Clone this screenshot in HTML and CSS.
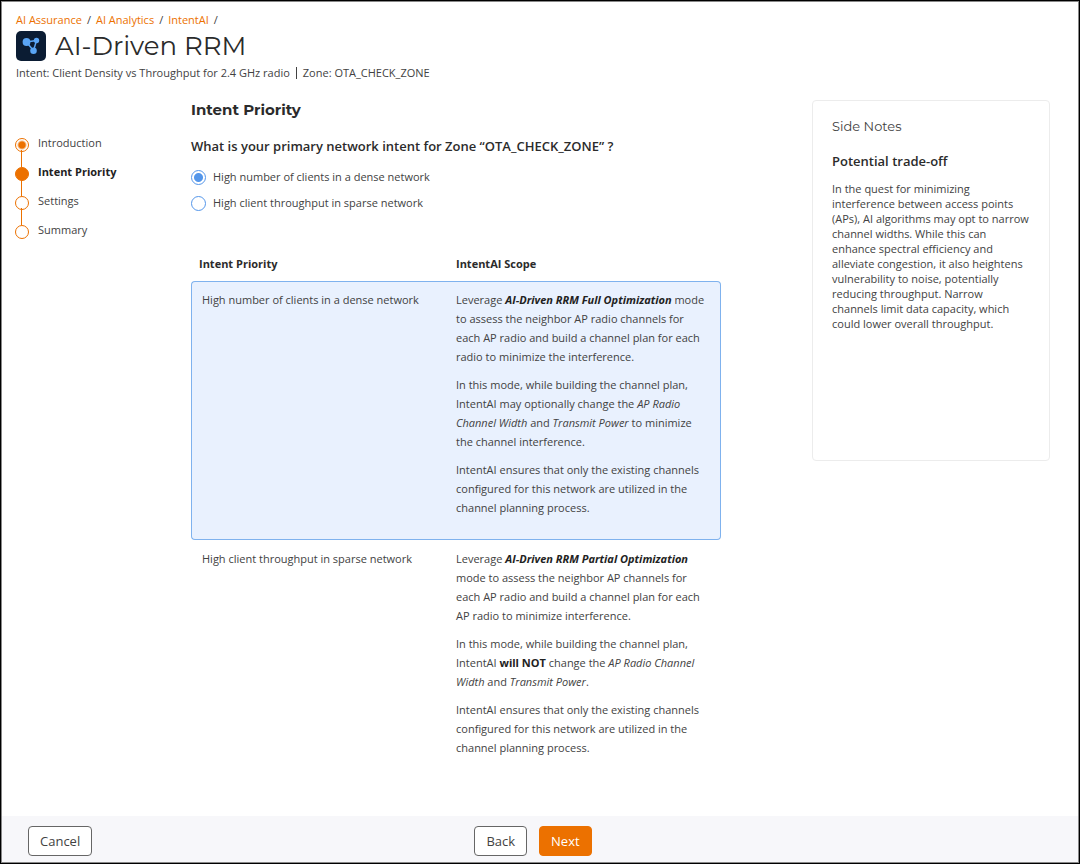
FILE: index.html
```html
<!DOCTYPE html>
<html lang="en">
<head>
  <meta charset="UTF-8" />
  <meta name="viewport" content="width=device-width, initial-scale=1" />
  <title>AI-Driven RRM</title>
  <link rel="stylesheet" href="styles.css">
</head>
<body>
  <form class="page">
    <header class="page-header">
      <nav class="breadcrumb" aria-label="Breadcrumb">
        <a href="#">AI Assurance</a><span>/</span>
        <a href="#">AI Analytics</a><span>/</span>
        <a href="#">IntentAI</a><span>/</span>
      </nav>
      <div class="title-row">
        <svg class="title-icon" viewBox="0 0 30 30" aria-hidden="true">
          <rect width="30" height="30" rx="5" fill="#0b1c33" />
          <path d="M10.500 11L20.500 9.500L17.500 19.700Z" fill="none" stroke="#5aa5f5" stroke-width="1.500" />
          <circle cx="10.500" cy="11" r="3.900" fill="#5aa5f5" />
          <circle cx="20.500" cy="9.500" r="2.700" fill="#5aa5f5" />
          <circle cx="17.500" cy="19.800" r="3.300" fill="#5aa5f5" />
        </svg>
        <h1>AI-Driven RRM</h1>
      </div>
      <div class="subtitle">
        <span>Intent: Client Density vs Throughput for 2.4 GHz radio</span>
        <span class="divider"></span>
        <span>Zone: OTA_CHECK_ZONE</span>
      </div>
    </header>

    <div class="content">
      <ol class="steps">
        <li class="step done">Introduction</li>
        <li class="step active" aria-current="step">Intent Priority</li>
        <li class="step">Settings</li>
        <li class="step">Summary</li>
      </ol>

      <main class="main">
        <h2>Intent Priority</h2>
        <fieldset class="options">
          <legend>What is your primary network intent for Zone “OTA_CHECK_ZONE” ?</legend>
          <label class="option"><input type="radio" name="intent" checked />High number of clients in a dense network</label>
          <label class="option"><input type="radio" name="intent" />High client throughput in sparse network</label>
        </fieldset>

        <table class="scope">
          <thead>
            <tr>
              <th scope="col">Intent Priority</th>
              <th scope="col">IntentAI Scope</th>
            </tr>
          </thead>
          <tbody>
            <tr class="selected">
              <td>High number of clients in a dense network</td>
              <td>
                <p>Leverage <b><i>AI-Driven RRM Full Optimization</i></b> mode to assess the neighbor AP radio channels for each AP radio and build a channel plan for each radio to minimize the interference.</p>
                <p>In this mode, while building the channel plan, IntentAI may optionally change the <i>AP Radio Channel Width</i> and <i>Transmit Power</i> to minimize the channel interference.</p>
                <p>IntentAI ensures that only the existing channels configured for this network are utilized in the channel planning process.</p>
              </td>
            </tr>
            <tr>
              <td>High client throughput in sparse network</td>
              <td>
                <p>Leverage <b><i>AI-Driven RRM Partial Optimization</i></b> mode to assess the neighbor AP channels for each AP radio and build a channel plan for each AP radio to minimize interference.</p>
                <p>In this mode, while building the channel plan, IntentAI <b>will NOT</b> change the <i>AP Radio Channel Width</i> and <i>Transmit Power</i>.</p>
                <p>IntentAI ensures that only the existing channels configured for this network are utilized in the channel planning process.</p>
              </td>
            </tr>
          </tbody>
        </table>
      </main>

      <aside class="notes">
        <h3>Side Notes</h3>
        <h4>Potential trade-off</h4>
        <p>In the quest for minimizing interference between access points (APs), AI algorithms may opt to narrow channel widths. While this can enhance spectral efficiency and alleviate congestion, it also heightens vulnerability to noise, potentially reducing throughput. Narrow channels limit data capacity, which could lower overall throughput.</p>
      </aside>
    </div>

    <footer class="actions">
      <div><button type="button" class="btn">Cancel</button></div>
      <div class="nav-buttons">
        <button type="button" class="btn">Back</button>
        <button type="button" class="btn primary">Next</button>
      </div>
    </footer>
  </form>
</body>
</html>
```

FILE: styles.css
```css
* {
  box-sizing: border-box;
}
body {
  margin: 0;
  padding-bottom: 1px;
  font-family: "Open Sans", sans-serif;
  font-size: 11px;
  line-height: 16px;
  color: #424242;
  background: #fff;
}
h1, h2, h3, h4, p, ol, fieldset {
  margin: 0;
  padding: 0;
}
h1, h2, h3 {
  font-family: Montserrat, Inter, sans-serif;
}
.page {
  display: flex;
  flex-direction: column;
  min-height: calc(100vh - 1px);
  border: 1px solid #000;
  outline: 1px solid #888;
  outline-offset: -2px;
}
.page-header {
  padding: 11px 15px 0;
}
.breadcrumb {
  display: flex;
  gap: 5px;
}
.breadcrumb a {
  color: #ec7100;
  text-decoration: none;
}
.title-row {
  display: flex;
  align-items: center;
  gap: 9px;
  margin-top: 3px;
}
.title-icon {
  width: 30px;
  height: 30px;
}
h1 {
  font-size: 26px;
  line-height: 30px;
  font-weight: 400;
  color: #2b2b2b;
}
.subtitle {
  display: flex;
  align-items: center;
  margin-top: 4px;
}
.divider {
  width: 1px;
  height: 12px;
  margin: 0 6px;
  background: #424242;
}

.content {
  flex: 1;
  display: grid;
  grid-template-columns: 176px minmax(0, 1fr) 238px;
  align-items: start;
  padding: 19px 29px 24px 14px;
}

/* progress steps */
.steps {
  list-style: none;
  padding-top: 35px;
}
.step {
  position: relative;
  height: 29px;
  padding-left: 23px;
}
.step:last-child {
  height: auto;
}
.step::before {
  content: "";
  position: absolute;
  left: 0;
  top: 3px;
  width: 12px;
  height: 12px;
  border: 1px solid #ec7100;
  border-radius: 50%;
}
.step:not(:last-child)::after {
  content: "";
  position: absolute;
  left: 6px;
  top: 15px;
  width: 1px;
  height: 17px;
  background: #ec7100;
}
.step.done::before {
  background: radial-gradient(circle, #ec7100 3px, #fff 5px);
}
.step.active {
  font-weight: 700;
  color: #222;
}
.step.active::before {
  background: #ec7100;
}

.main {
  padding-right: 91px;
}
h2 {
  font-size: 15px;
  line-height: 20px;
  font-weight: 700;
  color: #2b2b2b;
}
.options {
  border: 0;
}
.options legend {
  padding: 16px 0 8px;
  font-size: 13px;
  line-height: 20px;
  font-weight: 600;
  color: #2b2b2b;
}
.option {
  display: flex;
  align-items: center;
  gap: 7px;
  height: 26px;
}
.option input {
  appearance: none;
  width: 15px;
  height: 15px;
  margin: 0;
  border: 1px solid #5496ea;
  border-radius: 50%;
  background: #fff;
}
.option input:checked {
  background: radial-gradient(circle, #5496ea 4px, #fff 5px);
}

.scope {
  width: 100%;
  margin-top: 37px;
  border-spacing: 0;
  table-layout: fixed;
}
.scope th {
  padding: 3px 8px 9px;
  text-align: left;
  font-weight: 700;
  color: #2b2b2b;
}
.scope th:last-child {
  padding-left: 0;
}
.scope td {
  padding: 8px 10px 22px;
  line-height: 19px;
  vertical-align: top;
  border: 1px solid transparent;
}
.scope td:first-child {
  border-right: 0;
}
.scope td:last-child {
  padding-left: 0;
  border-left: 0;
}
.scope .selected td {
  background: #e9f1fe;
  border-color: #7fb2ee;
}
.scope .selected td:first-child {
  border-radius: 4px 0 0 4px;
}
.scope .selected td:last-child {
  border-radius: 0 4px 4px 0;
}
.scope p + p {
  margin-top: 9px;
}
.scope b {
  color: #222;
}

.notes {
  min-height: 361px;
  padding: 15px 18px 16px 19px;
  border: 1px solid #ececec;
  border-radius: 4px;
}
h3 {
  font-size: 13px;
  line-height: 20px;
  font-weight: 400;
}
h4 {
  margin: 15px 0 10px;
  font-size: 13px;
  line-height: 20px;
  font-weight: 600;
  color: #2b2b2b;
}
.notes p {
  line-height: 15px;
}

.actions {
  display: grid;
  grid-template-columns: 1fr auto 1fr;
  align-items: center;
  padding: 10px 40px 6px 26px;
  background: #f7f7fa;
  margin: 0 1px 1px;
}
.nav-buttons {
  display: flex;
  gap: 12px;
}
.btn {
  height: 30px;
  padding: 0 11px;
  font-family: inherit;
  font-size: 13px;
  color: #424242;
  background: #fff;
  border: 1px solid #666;
  border-radius: 4px;
}
.btn.primary {
  color: #fff;
  background: #ec7100;
  border-color: #ec7100;
}
```
